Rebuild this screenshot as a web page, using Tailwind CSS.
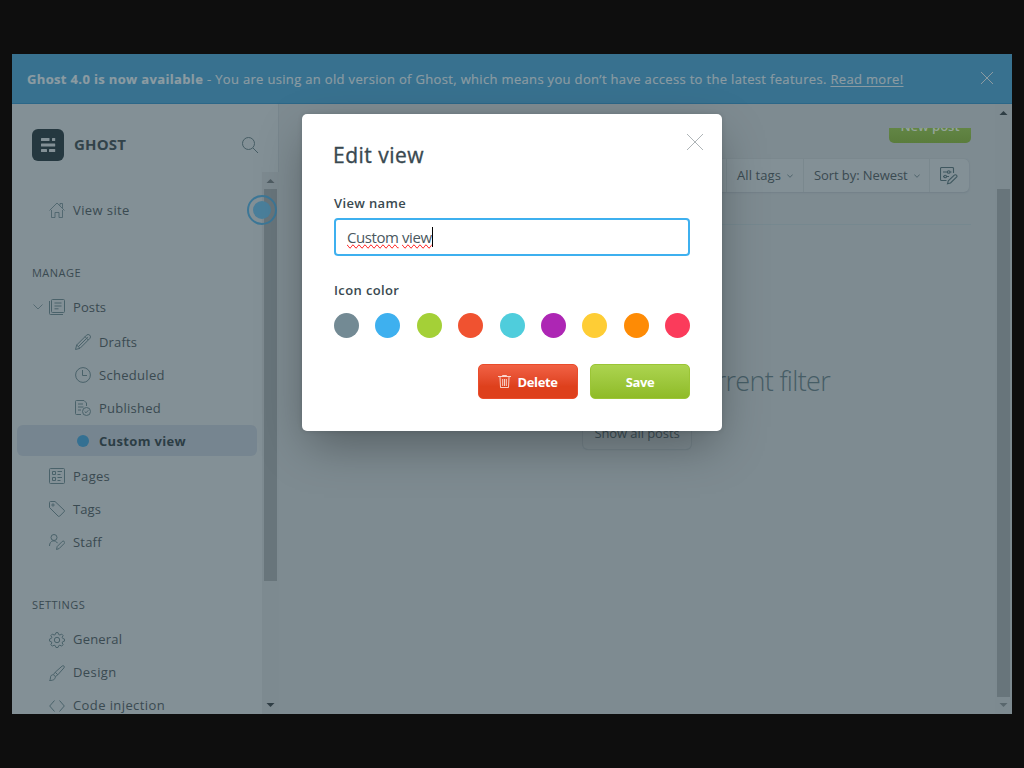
<!DOCTYPE html>
<html lang="en">
<head>
<meta charset="utf-8">
<title>Ghost Admin</title>
<script src="https://cdn.jsdelivr.net/npm/@tailwindcss/browser@4"></script>
</head>
<body class="h-screen overflow-hidden bg-[#0e0e0e] px-3 py-[54px] font-['Open_Sans','Noto_Sans',sans-serif] text-[13px] text-[#3a4a51]">
<div class="relative flex h-[660px] w-[1000px] flex-col overflow-hidden bg-[#7e8b91]">

  <!-- Upgrade banner -->
  <header class="flex h-[50px] shrink-0 items-center justify-between border-b border-[#2c6788] bg-[#38718f] pr-[19px] pl-[15px] text-[#8b9ba2]">
    <p class="pt-0.5 whitespace-nowrap tracking-[0.33px] [-webkit-text-stroke:0.2px]"><b class="font-bold tracking-[0.35px]">Ghost 4.0 is now available</b> - You are using an old version of Ghost, which means you don’t have access to the latest features. <a class="underline underline-offset-2">Read more!</a></p>
    <svg class="mb-0.5 size-3" viewBox="0 0 12 12" fill="none" stroke="currentColor"><path d="M0 0l12 12M12 0L0 12"/></svg>
  </header>

  <div class="flex min-h-0 flex-1">
    <!-- Sidebar -->
    <nav class="flex w-[267px] shrink-0 flex-col border-r border-[#78868d] bg-[#839096]">
      <div class="flex h-[68px] shrink-0 items-center pt-[14px] pr-5 pl-5">
        <svg class="size-8" viewBox="0 0 32 32"><rect width="32" height="32" rx="6" fill="#253840"/><g fill="#839096"><rect x="9" y="9" width="8.500" height="3" rx=".5"/><rect x="20" y="9" width="3.200" height="3" rx=".5"/><rect x="9" y="14.500" width="14.200" height="3" rx=".5"/><rect x="9" y="20" width="6" height="3" rx=".5"/><rect x="17" y="20" width="6.200" height="3" rx=".5"/></g></svg>
        <span class="mb-0.5 ml-2.5 flex-1 text-[15px] font-bold tracking-[0.15px] text-[#32434a]">GHOST</span>
        <svg class="size-4" viewBox="0 0 16 16" fill="none" stroke="#465c64"><circle cx="6.500" cy="6.500" r="6"/><path d="M11 11l5 5"/></svg>
      </div>
      <div class="flex min-h-0 flex-1">
        <div class="w-[250px] shrink-0 overflow-hidden pt-[22px] tracking-[0.3px]">
          <div class="flex h-8 items-center gap-2 pl-[37px]">
            <svg class="size-4" viewBox="0 0 16 16" fill="none" stroke="#4a626a" stroke-width=".85"><path d="M.5 8.500L8 1l7.500 7.500M11 3.500v-2h2.500v4.500M2.500 8v7.500h3.500v-5h4v5h3.500V8"/></svg>
            <span class="pt-0.5 tracking-[0.4px]">View site</span>
          </div>
          <div class="mt-[39px] h-4 pl-5 text-[11px] leading-4 tracking-[0.47px]">MANAGE</div>
          <div class="mt-2.5 flex h-8 items-center pl-[21px]">
            <svg class="mr-1.5 h-1.5 w-2.5" viewBox="0 0 10 6" fill="none" stroke="#566b73"><path d="M.5.5L5 5 9.500.5"/></svg>
            <svg class="mr-2 size-4" viewBox="0 0 16 16" fill="none" stroke="#4a626a"><rect x="2.500" y=".5" width="13" height="13" rx="1"/><path d="M.5 2v12.500a1 1 0 0 0 1 1H14M5.500 4h7M5.500 7h7M5.500 9.800h4"/></svg>
            <span class="pt-0.5 tracking-[0.1px]">Posts</span>
          </div>
          <div class="mt-[3px] flex h-8 items-center gap-2 pl-[63px]">
            <svg class="size-4" viewBox="0 0 16 16" fill="none" stroke="#4a626a"><path d="M.5 15.500l1.200-4.500L11.500 1.200a2 2 0 0 1 3.300 3.300L5 14.300zM1.700 11L5 14.300M3.300 12.700l9.500-9.500M10 2.700L13.300 6"/></svg>
            <span class="pt-0.5 tracking-[0.15px]">Drafts</span>
          </div>
          <div class="mt-px flex h-8 items-center gap-2 pl-[63px]">
            <svg class="size-4" viewBox="0 0 16 16" fill="none" stroke="#4a626a"><circle cx="8" cy="8" r="7.400"/><path d="M7.500 3v5.500H12"/></svg>
            <span class="pt-0.5">Scheduled</span>
          </div>
          <div class="mt-px flex h-8 items-center gap-2 pl-[63px]">
            <svg class="size-4" viewBox="0 0 16 16" fill="none" stroke="#4a626a"><path d="M6 14.500H1.500a1 1 0 0 1-1-1v-12a1 1 0 0 1 1-1H9L11.500 3v3M3 4h5M3 7h5.500M3 10h3"/><circle cx="11.500" cy="11.500" r="4"/><path d="M9.700 11.500l1.300 1.300 2.300-2.500"/></svg>
            <span class="pt-0.5 tracking-[0.25px]">Published</span>
          </div>
          <div class="mt-px mb-px ml-[5px] flex h-[31px] w-60 items-center rounded-md bg-[#768590] pl-[60px]">
            <i class="size-3 rounded-full bg-[#347092]"></i>
            <b class="ml-2.5 pt-0.5 font-bold tracking-[0.34px] text-[#2c3d45]">Custom view</b>
          </div>
          <div class="mt-[3px] flex h-8 items-center gap-2 pl-[37px]">
            <svg class="mt-0.5 size-4" viewBox="0 0 16 16" fill="none" stroke="#4a626a"><rect x=".5" y=".5" width="15" height="15" rx="1"/><path d="M3.500 3.500h3v3h-3zM3.500 9.500h3v3h-3zM8.500 3.500H13M8.500 6.500h3M8.500 9.500H13M8.500 12.500h3"/></svg>
            <span class="pt-1">Pages</span>
          </div>
          <div class="mt-px flex h-8 items-center gap-2 pl-[37px]">
            <svg class="mt-0.5 size-4" viewBox="0 0 16 16" fill="none" stroke="#4a626a"><path d="M.5 1.500a1 1 0 0 1 1-1H6l9.200 8.700a1 1 0 0 1 0 1.400l-4.600 4.600a1 1 0 0 1-1.400 0L.5 6.500z"/><circle cx="4" cy="4" r="1.100"/></svg>
            <span class="pt-1 tracking-[0.1px]">Tags</span>
          </div>
          <div class="mt-px flex h-8 items-center gap-2 pl-[37px]">
            <svg class="mt-0.5 size-4" viewBox="0 0 16 16" fill="none" stroke="#4a626a"><circle cx="5" cy="3.500" r="3"/><path d="M.5 12c0-6 6-6.500 8-2.800M7.500 15.500l.7-3 5-5a1.300 1.300 0 0 1 2 2l-5 5z"/></svg>
            <span class="pt-1 tracking-[0.2px]">Staff</span>
          </div>
          <div class="mt-10 h-4 pl-5 text-[11px] leading-4 tracking-[0.45px]">SETTINGS</div>
          <div class="mt-2.5 flex h-8 items-center gap-2 pl-[37px]">
            <svg class="mt-0.5 size-4" viewBox="0 0 16 16" fill="none" stroke="#4a626a" stroke-linejoin="round"><path d="M6.300 2.500L7 .6h2l.7 1.900 1.200.5 1.800-.9 1.400 1.400L13.200 5.300l.5 1.100 1.800.7v2l-1.800.6-.5 1.200.9 1.800-1.400 1.400-1.800-.9-1.200.5-.7 1.800H7l-.7-1.800-1.200-.5-1.800.9-1.400-1.400.9-1.800-.5-1.200-1.800-.6v-2l1.800-.7.5-1.100-.9-1.800 1.400-1.400 1.800.9z"/><circle cx="8" cy="8" r="2.700"/></svg>
            <span class="pt-0.5 tracking-[0.2px]">General</span>
          </div>
          <div class="mt-px flex h-8 items-center gap-2 pl-[37px]">
            <svg class="mt-0.5 size-4" viewBox="0 0 16 16" fill="none" stroke="#4a626a"><path d="M.5 15.500c1.500-1 .3-4 2-5.300 2.400-1.500 5 1.200 3.300 3.500-1 1.500-3.300 1.800-5.300 1.800zM4.500 9.500l1.700-2.300 7-6.200c1.300-1 2.800.5 1.800 1.800l-6.200 7-2.300 1.700M6.200 7.200l2.600 2.600"/></svg>
            <span class="pt-0.5 tracking-[0.4px]">Design</span>
          </div>
          <div class="mt-px flex h-8 items-center gap-2 pl-[37px]">
            <svg class="mt-0.5 size-4" viewBox="0 0 16 16" fill="none" stroke="#4a626a"><path d="M5.500 2.500L.7 8l4.800 5.500M10.500 2.500L15.300 8l-4.800 5.500"/></svg>
            <span class="pt-0.5 tracking-[0.4px]">Code injection</span>
          </div>
        </div>
        <!-- Sidebar scrollbar -->
        <div class="flex w-[17px] shrink-0 flex-col items-center bg-[#7d8a90]">
          <svg class="h-[17px] w-[17px]" viewBox="0 0 17 17"><path d="M4.500 11l4-4 4 4z" fill="#4f5d63"/></svg>
          <div class="h-[392px] w-[13px] bg-[#68757b]"></div>
          <svg class="mt-auto h-[17px] w-[17px]" viewBox="0 0 17 17"><path d="M4.500 6l4 4 4-4z" fill="#2f3e45"/></svg>
        </div>
      </div>
    </nav>

    <!-- Posts screen -->
    <main class="flex min-w-0 flex-1">
      <div class="flex flex-1 flex-col pt-6 pr-6 pl-6">
        <div class="flex h-[15px] items-end justify-end overflow-hidden">
          <button class="h-[34px] w-[82px] shrink-0 rounded-[5px] bg-linear-to-b from-[#6d9150] to-[#5a7c3c] pt-0.5 text-[13px] font-semibold text-[#94a49a]">New post</button>
        </div>
        <div class="mt-4 mr-0.5 flex h-[33px] items-stretch justify-end rounded-[5px] bg-[#839096] shadow-[0_0_1px_#6f7d84,0_1px_2px_#74828a]">
          <div class="flex w-[77px] items-center border-l border-[#7a888e] pt-px pl-[10px] tracking-[0.08px]">All tags<svg class="ml-1.5 h-1 w-1.5" viewBox="0 0 6 4" fill="none" stroke="#4f646c"><path d="M.3.500L3 3.300 5.700.5"/></svg></div>
          <div class="flex w-[126px] items-center border-l border-[#7a888e] pt-px pl-[10px] tracking-[-0.08px] whitespace-nowrap">Sort by: Newest<svg class="ml-1.5 h-1 w-1.5" viewBox="0 0 6 4" fill="none" stroke="#4f646c"><path d="M.3.500L3 3.300 5.700.5"/></svg></div>
          <div class="flex w-10 items-center border-l border-[#7a888e] pl-[10px]">
            <svg class="h-[18px] w-[18px]" viewBox="0 0 18 18" fill="none" stroke="#3f575f" stroke-width="1.100"><path d="M6.500 13.500h-5a1 1 0 0 1-1-1v-11a1 1 0 0 1 1-1h11a1 1 0 0 1 1 1V6M3 5h4.500M10 5h1.500M3 9.500h1M6.500 9.500H9"/><circle cx="8.700" cy="5" r="1.300"/><circle cx="5.200" cy="9.500" r="1.300"/><path d="M7.500 16.800l.8-3 6-5.600a1.400 1.400 0 0 1 2.200 2l-6 5.800z"/></svg>
          </div>
        </div>
        <div class="mt-8 h-px bg-[#76888f]"></div>
        <div class="flex flex-col items-center pt-[136px]">
          <p class="h-10 pl-3 text-[27px] leading-10 font-light tracking-[-0.68px] whitespace-nowrap text-[#465d66]">No posts match the current filter</p>
          <button class="mt-[14px] h-[34px] w-[108px] rounded-[5px] bg-[#7f8c92] pt-[3px] tracking-[-0.08px] text-[#3f525a] shadow-[0_0_0_1px_#75838a,0_1px_1px_#6c7b82]">Show all posts</button>
        </div>
      </div>
      <div class="flex w-[17px] shrink-0 flex-col items-center bg-[#7d8a90]">
        <svg class="h-[17px] w-[17px]" viewBox="0 0 17 17"><path d="M4.500 11l4-4 4 4z" fill="#2f3e45"/></svg>
        <div class="mt-[68px] h-[508px] w-[13px] bg-[#68757b]"></div>
        <svg class="mt-auto h-[17px] w-[17px]" viewBox="0 0 17 17"><path d="M4.500 6l4 4 4-4z" fill="#59676d"/></svg>
      </div>
    </main>
  </div>

  <!-- Pulse marker over the sidebar edge -->
  <div class="absolute top-[141px] left-[235px] flex size-[30px] items-center justify-center rounded-full border-2 border-[#3c7797]"><i class="size-[18px] rounded-full bg-[#4a7f9b]"></i></div>

  <!-- Edit view dialog -->
  <section class="absolute top-[60px] left-[290px] flex h-[317px] w-[420px] flex-col rounded-[5px] bg-white px-8 text-[#394950] shadow-[0_0_5px_rgba(0,0,0,0.12),0_18px_45px_-6px_rgba(0,0,0,0.34)]">
    <div class="flex items-start justify-between pt-5">
      <h1 class="-ml-px mt-1.5 text-[21px] leading-[30px] font-medium tracking-[0.48px] [-webkit-text-stroke:0.35px]">Edit view</h1>
      <svg class="-mr-[13px] size-4" viewBox="0 0 16 16" fill="none" stroke="#aeb4b7"><path d="M0 0l16 16M16 0L0 16"/></svg>
    </div>
    <label class="mt-[23px] h-5 leading-5 font-semibold tracking-[0.35px]">View name</label>
    <div class="mt-[5px] flex h-[38px] w-[356px] shrink-0 items-center rounded border-2 border-[#3eb0ef] px-[11px] text-[15px] tracking-[-0.42px] text-[#4a585e]">
      <span class="border-r border-black leading-5"><span class="[text-decoration-line:spelling-error]">Custom</span> <span class="[text-decoration-line:spelling-error]">view</span></span>
    </div>
    <div class="mt-6 h-5 leading-5 font-semibold tracking-[0.38px]">Icon color</div>
    <div class="mt-[13px] flex w-[356px] justify-between">
      <i class="size-[25px] rounded-full bg-[#738a94]"></i><i class="size-[25px] rounded-full bg-[#3eb0ef]"></i><i class="size-[25px] rounded-full bg-[#a4d037]"></i><i class="size-[25px] rounded-full bg-[#f05230]"></i><i class="size-[25px] rounded-full bg-[#4fcddc]"></i><i class="size-[25px] rounded-full bg-[#ad26b4]"></i><i class="size-[25px] rounded-full bg-[#fecd35]"></i><i class="size-[25px] rounded-full bg-[#fe8b05]"></i><i class="size-[25px] rounded-full bg-[#fb3b5b]"></i>
    </div>
    <div class="mt-[26px] flex w-[356px] justify-end gap-3 text-[13px] font-bold tracking-[-0.35px] text-white">
      <button class="flex h-[35px] w-[100px] items-center justify-center rounded-[5px] border border-[#ea4c2b] bg-linear-to-b from-[#f16144] to-[#de401c] to-65% pt-0.5">
        <svg class="mr-[6px] mb-0.5 h-[13px] w-[13px]" viewBox="0 0 13 13" fill="none" stroke="#fff" stroke-opacity=".85" stroke-width=".9"><path d="M0 1.500h13M4.500 1V.5h4V1M2 2l.5 10.500h8L11 2M4.700 4v7M6.500 4v7M8.300 4v7"/></svg>Delete
      </button>
      <button class="h-[35px] w-[100px] rounded-[5px] border border-[#9bc536] bg-linear-to-b from-[#acd44f] to-[#8fbb26] pt-0.5">Save</button>
    </div>
  </section>
</div>
</body>
</html>
